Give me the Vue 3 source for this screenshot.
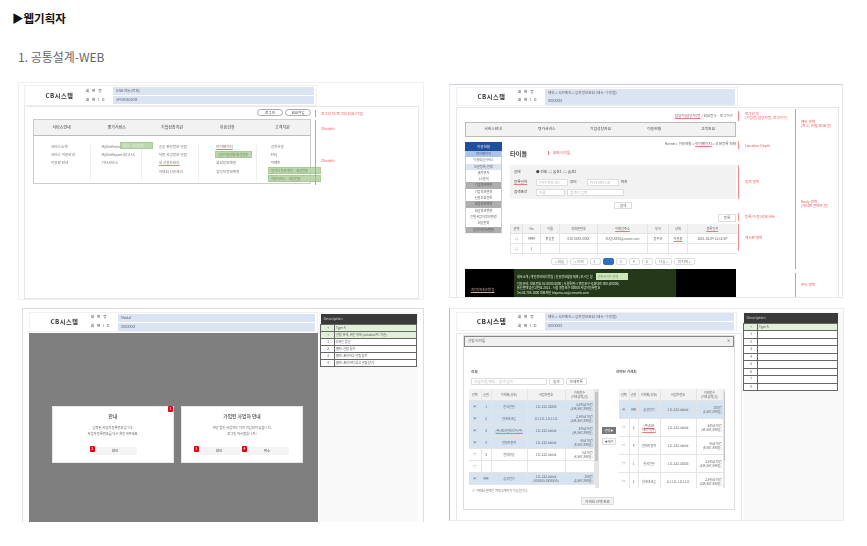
<script setup>
const navMenus = ['서비스안내', '평가서비스', '기업성장지원', '이용현황', '고객지원']
const navLists = [
  ['서비스소개', '서비스 이용안내', '이용료 안내'],
  ['MyBizRating', 'MyBizReport(보고서)', '기타서비스'],
  ['공공 조달정보 알림', '자동 사업정보 알림', '내 신용도관리', '거래처 신용관리'],
  ['마이페이지', '\u00a0', '회원정보변경', '담당자정보변경'],
  ['공지사항', 'FAQ', '이벤트']
]
const sideMenu = [
  ['마이페이지', 'on'], ['이용회원서비스', ''], ['부분등록/현황', 'sub'], ['출자연자', ''], ['1:1문의', ''],
  ['기업정보변경', 'grp'], ['기업정보변경', ''], ['신용조회등록', ''], ['회원정보변경', 'grp'],
  ['회원정보변경', ''], ['간편사업자정보변경', ''], ['회원탈퇴', ''], ['담당자정보변경', 'grp']
]
const p2Head = ['선택', 'No', '이름', '휴대폰번호', '이메일주소', '부서', '상태', '등록일자']
const p2Cols = [12, 18, 19, 38, 50, 21, 19, 49]
const notes = [
  { t: '로그인 후\n(기업명, 담당자명, 로그아웃)', x: 288, y: 4 },
  { t: 'Location Depth', x: 288, y: 36 },
  { t: '검색 영역', x: 288, y: 72 },
  { t: '등록/수정/삭제 버튼', x: 288, y: 107 },
  { t: '게시판 영역', x: 288, y: 128 },
  { t: '메인 영역\n(로고, 유틸/GNB 등)', x: 344, y: 12 },
  { t: 'Body 영역\n(게시판 콘텐츠 등)', x: 344, y: 92 },
  { t: '푸터 영역', x: 344, y: 175 }
]
const bars = [
  { x: 281, y: 3, h: 10 }, { x: 281, y: 33, h: 8 }, { x: 281, y: 57, h: 34 },
  { x: 281, y: 105, h: 8 }, { x: 281, y: 116, h: 27 },
  { x: 338, y: 1, h: 160 }, { x: 338, y: 165, h: 24 }
]
const descA = [
  ['+', 'Type A', 1], ['+', '알림 위해, 버튼 위해 (window PC 기준)', 1], ['1', 'X 버튼 없음', 0],
  ['2', '클릭: 알림 닫기', 0], ['3', '클릭: 처리하고 알림 닫기', 0], ['4', '클릭: 처리하지 않고 알림 닫기', 0]
]
const descRows = ['1', '2', '3', '4', '5', '6', '7', '8']
const leftRows = [
  ['1', '한국건설', '111-222-33333', '3,345,678건', '(334,567,890원)', 1, 0],
  ['2', '한국테크론', '111111-1111111', '2,345,678건', '(234,567,890원)', 1, 0],
  ['3', '(주)ADS인테리어(주)', '111-222-#####', '345,678건', '(34,567,890원)', 1, 1],
  ['4', '현대자동차', '111-222-#####', '45,678건', '(9,567,890원)', 1, 0],
  ['5', '현대정공', '111-222-#####', '5,678건', '(4,567,890원)', 0, 0],
  ['', '', '', '', '', 0, 0],
  ['999', '삼성전기', '111-222-#####\n(555555-5555555)', '200건', '(3,567,890원)', 1, 0]
]
const rightRows = [
  ['999', '삼성전기', '111-222-#####', '200건', '(3,567,890원)', 1, 0],
  ['3', '(주)ADS\n테리어(주)', '111-222-#####', '345,678건', '(34,567,890원)', 0, 1],
  ['4', '현대자동차', '111-222-#####', '45,678건', '(9,567,890원)', 0, 0],
  ['1', '한국건설', '111-222-33333', '3,345,678건', '(334,567,890원)', 0, 0],
  ['2', '한국테크론', '111111-1111111', '2,345,678건', '(234,567,890원)', 0, 0]
]
</script>

<template>
  <div class="page">
    <h1 class="page-title">▶웹기획자</h1>
    <h2 class="sec-title">1. 공통설계-WEB</h2>

    <div class="shots">
      <!-- 메인 메뉴 -->
      <section class="shot p1">
        <div class="head">
          <strong class="logo">CB시스템</strong>
          <div class="head-rows">
            <div class="head-row"><span class="lbl">화 면 명</span><span class="fld">GNB 메뉴(전체)</span></div>
            <div class="head-row"><span class="lbl">화 면 I D</span><span class="fld">SP0805020M</span></div>
          </div>
        </div>
        <div class="frame">
          <div class="btns">
            <span class="pill">로그인</span>
            <span class="pill">회원가입</span>
          </div>
          <div class="gnb">
            <div class="gnb-top">
              <span v-for="m in navMenus" :key="m">{{ m }}</span>
            </div>
            <div class="gnb-body">
              <ul v-for="(list, i) in navLists" :key="i">
                <li v-for="item in list" :key="item" :class="{ redline: item === '마이페이지' || item === '내 신용도관리' }">{{ item }}</li>
              </ul>
            </div>
            <span class="hl h1">통합 · 회원전용</span>
            <span class="hl h2">신용이용현황 회원전용</span>
            <span class="hl h3">평가서 진위 확인 · 회원전용</span>
            <span class="hl h4">자문서비스 · 회원전용</span>
          </div>
          <i class="bar b1"></i>
          <em class="note n1">로그인 전/로그인(회원/기업)</em>
          <i class="bar b2"></i>
          <em class="note n2">10width</em>
          <em class="note n3">20width</em>
        </div>
      </section>

      <!-- 서브 페이지 -->
      <section class="shot p2">
        <div class="head">
          <strong class="logo">CB시스템</strong>
          <div class="head-rows joined">
            <div class="head-row"><span class="lbl">화 면 명</span><span class="fld">메인 &gt; 서브메인 &gt; 입력정보조회 (제시·수정탭)</span></div>
            <div class="head-row"><span class="lbl">화 면 I D</span><span class="fld">XXXXXXX</span></div>
          </div>
        </div>
        <div class="frame">
          <div class="util"><span class="redline">담당자(담당자)명</span> / 회원명 5 · 로그아웃</div>
          <div class="gnb-line">
            <span v-for="m in navMenus" :key="m">{{ m }}</span>
          </div>
          <div class="sub-wrap">
            <aside class="side">
              <div class="side-head">이용현황</div>
              <div v-for="(s, i) in sideMenu" :key="i" class="side-row" :class="s[1]">{{ s[0] }}</div>
            </aside>
            <div class="sub-main">
              <div class="crumb">Home &gt; 이용현황 &gt; <span class="redline">마이페이지</span> &gt; 부분등록 현황</div>
              <div class="title-row"><b>타이틀</b><span class="title-note">화면 타이틀</span></div>
              <div class="search">
                <div class="s-row"><span class="s-lbl">상태</span><span>● 전체 &nbsp;○ 옵션1 &nbsp;○ 옵션2</span></div>
                <div class="s-row">
                  <span class="s-lbl redline">등록일자</span>
                  <span class="s-in w32">YYYY-MM-DD</span><span>부터</span>
                  <span class="s-in w32 gap">YYYY-MM-DD</span><span>까지</span>
                </div>
                <div class="s-row">
                  <span class="s-lbl">검색조건</span>
                  <span class="s-in w29">이름</span>
                  <span class="s-in w57"><span class="redline">검색어</span> 입력</span>
                </div>
              </div>
              <div class="center"><span class="mini-btn">검색</span></div>
              <div class="right"><span class="mini-btn">등록</span></div>
              <table class="grid g2">
                <colgroup><col v-for="(w, i) in p2Cols" :key="i" :style="{ width: w + 'px' }" /></colgroup>
                <tr><th v-for="h in p2Head" :key="h"><span :class="{ redline: h === '이메일주소' || h === '등록일자' }">{{ h }}</span></th></tr>
                <tr>
                  <td>○</td><td>9999</td><td>홍길동</td><td>010-XXXX-XXXX</td><td>SUQI.XXXX@naver.com</td><td>총무부</td>
                  <td><span class="redline">사용중</span></td><td>2021-02-04 13:12:59</td>
                </tr>
                <tr><td>○</td><td>1</td><td></td><td></td><td></td><td></td><td></td><td></td></tr>
              </table>
              <div class="paging">
                <span>&lt; 처음</span><span>&lt; 이전</span><span>1</span><span class="cur">2</span>
                <span>3</span><span>4</span><span>5</span><span>다음 &gt;</span><span>마지막 &gt;</span>
              </div>
            </div>
          </div>
          <footer class="foot">
            <span class="foot-link">개인정보처리방침</span>
            <div class="foot-box">
              <div class="foot-top">회사소개 | 개인정보처리방침 | 신용정보활용체제 | 오시는 길 <span class="foot-sel">관련사이트 선택</span></div>
              <p>이용문의: 대표번호 02-0000-0000 | 서울특별시 영등포구 국회대로 000 (00000)</p>
              <p>통신판매업신고번호 2021 - 서울 영등포구 00000 사업자등록번호</p>
              <p>Tel:02.708.1000 대표메일 bizpnsu.xx@crmweb.com</p>
            </div>
          </footer>
          <i v-for="(b, i) in bars" :key="i" class="bar" :style="{ left: b.x + 'px', top: b.y + 'px', height: b.h + 'px' }"></i>
          <em v-for="n in notes" :key="n.t" class="note pre" :style="{ left: n.x + 'px', top: n.y + 'px' }">{{ n.t }}</em>
        </div>
      </section>

      <!-- 알림 모달 -->
      <section class="shot p3">
        <div class="split">
          <div class="left-col">
            <div class="head">
              <strong class="logo">CB시스템</strong>
              <div class="head-rows">
                <div class="head-row"><span class="lbl">화 면 명</span><span class="fld">Modal</span></div>
                <div class="head-row"><span class="lbl">화 면 I D</span><span class="fld">XXXXXXX</span></div>
              </div>
            </div>
            <div class="dim">
              <div class="modal">
                <b class="badge b-top">1</b>
                <h3>안내</h3>
                <p>입력된 사업자등록번호입니다.<br />사업자등록번호를 다시 확인해주세요.</p>
                <div class="m-btns"><span class="m-btn"><b class="badge">2</b>확인</span></div>
              </div>
              <div class="modal">
                <h3>가입된 사업자 안내</h3>
                <p>해당 법인 사업자는 이미 가입되어 있습니다.<br />로그인 하시겠습니까?</p>
                <div class="m-btns">
                  <span class="m-btn"><b class="badge">3</b>확인</span>
                  <span class="m-btn"><b class="badge">4</b>취소</span>
                </div>
              </div>
            </div>
          </div>
          <div class="desc-pane">
            <table class="desc">
              <colgroup><col class="no-col" /><col /></colgroup>
              <tr><th colspan="2">Description</th></tr>
              <tr v-for="d in descA" :key="d[1]" :class="{ green: d[2] }"><td class="no">{{ d[0] }}</td><td>{{ d[1] }}</td></tr>
            </table>
          </div>
        </div>
      </section>

      <!-- 거래처 선택 -->
      <section class="shot p4">
        <div class="split">
          <div class="left-col">
            <div class="head">
              <strong class="logo big">CB시스템</strong>
              <div class="head-rows">
                <div class="head-row"><span class="lbl">화 면 명</span><span class="fld">메인 &gt; 서브메인 &gt; 입력정보조회 (제시·수정탭)</span></div>
                <div class="head-row"><span class="lbl">화 면 I D</span><span class="fld">XXXXXXX</span></div>
              </div>
            </div>
            <div class="frame">
              <div class="pop">
                <div class="pop-title"><span>알림 타이틀</span><span>✕</span></div>
                <div class="pop-body">
                  <div class="lists">
                    <div class="list-left">
                      <div class="list-lbl">전체</div>
                      <div class="finder">
                        <span class="find-in">사업자명/번호 · 검색 입력</span>
                        <span class="mini-btn">검색</span><span class="mini-btn">전체목록</span>
                      </div>
                      <div class="scroll-t">
                        <table class="grid pick pl">
                          <colgroup><col class="c12" /><col class="c10" /><col class="c36" /><col class="c38" /><col class="c29" /></colgroup>
                          <tr><th>선택</th><th>순번</th><th>거래처(상호)</th><th>사업자번호</th><th>거래건수<br />(거래금액/원)</th></tr>
                          <tr v-for="(r, i) in leftRows" :key="i" :class="{ sel: r[5] }">
                            <td>{{ r[5] ? '▣' : '□' }}</td><td>{{ r[0] }}</td><td><span :class="{ redline: r[6] }">{{ r[1] }}</span></td>
                            <td class="pre">{{ r[2] }}</td><td class="amt">{{ r[3] }}<br />{{ r[4] }}</td>
                          </tr>
                        </table>
                        <div class="sbar"><i></i></div>
                      </div>
                      <div class="hint">※ 거래처 선택은 최대 5개까지 가능합니다.</div>
                    </div>
                    <div class="move">
                      <span class="mv dark">선택 ▶</span>
                      <span class="mv">◀ 제외</span>
                    </div>
                    <div class="list-right">
                      <div class="list-lbl">선택된 거래처</div>
                      <div class="scroll-t">
                        <table class="grid pick pr">
                          <colgroup><col class="c10" /><col class="c9" /><col class="c22" /><col class="c36" /><col class="c27" /></colgroup>
                          <tr><th>선택</th><th>순번</th><th>거래처(상호)</th><th>사업자번호</th><th>거래건수<br />(거래금액/원)</th></tr>
                          <tr v-for="(r, i) in rightRows" :key="i" :class="{ sel: r[5] }">
                            <td>{{ r[5] ? '▣' : '□' }}</td><td>{{ r[0] }}</td><td class="pre"><span :class="{ redline: r[6] }">{{ r[1] }}</span></td>
                            <td>{{ r[2] }}</td><td class="amt">{{ r[3] }}<br />{{ r[4] }}</td>
                          </tr>
                        </table>
                        <div class="sbar"><i></i></div>
                      </div>
                    </div>
                  </div>
                  <div class="center"><span class="mini-btn wide">거래처 선택 완료</span></div>
                </div>
              </div>
            </div>
          </div>
          <div class="desc-pane">
            <table class="desc">
              <colgroup><col class="no-col" /><col /></colgroup>
              <tr><th colspan="2">Description</th></tr>
              <tr class="green"><td class="no">+</td><td>Type A</td></tr>
              <tr v-for="d in descRows" :key="d" class="tall"><td class="no">{{ d }}</td><td></td></tr>
            </table>
          </div>
        </div>
      </section>
    </div>
  </div>
</template>

<style>
html, body { margin: 0; background: #fff; }
</style>

<style scoped>
.page {
  width: 867px;
  height: 546px;
  overflow: hidden;
  box-sizing: border-box;
  padding-top: 11px;
  font-family: "Noto Sans CJK KR", "Noto Sans", sans-serif;
  color: #444;
}
.page-title { margin: 0 0 0 12px; font-size: 11.5px; line-height: 14px; font-weight: 700; color: #111; }
.sec-title { margin: 25px 0 0 18px; font-size: 12px; line-height: 14px; font-weight: 400; color: #666; }

.shots {
  display: grid;
  grid-template-columns: 431px 400px;
  grid-template-rows: 218px 214px;
  row-gap: 8px;
  margin: 18px 0 0 18px;
}
.shot {
  position: relative;
  box-sizing: border-box;
  background: #fff;
  font-size: 3.6px;
  line-height: 1.2;
  filter: blur(0.4px);
  overflow: hidden;
}
.redline { text-decoration: underline; text-decoration-color: #ee7777; }
.pre { white-space: pre-line; }
.center { display: flex; justify-content: center; }
.right { display: flex; justify-content: flex-end; }

/* panels */
.p1 { width: 406px; height: 218px; padding: 2px 5px 0; border: 1px solid #efefef; }
.p2 { width: 394px; height: 214px; margin: 2px 0 0; padding: 2px 5px 0 6px; border: 1px solid #e8e8e8; border-top-color: #ccd; }
.p3 { width: 402px; height: 214px; margin-left: 4px; padding: 3px 6px 0 6px; border: 1px solid #ddd; border-bottom: 0; }
.p4 { width: 395px; height: 213px; padding: 3px 6px 0 6px; border: 1px solid #ececec; border-left: 1px solid #bbb; }

/* screen header */
.head { display: flex; align-items: center; width: 293px; height: 21px; box-sizing: border-box; border: 1px solid #f0f0f0; }
.p2 .head { width: 282px; height: 19px; }
.p3 .head { width: 289px; height: 20px; }
.p4 .head { width: 281px; height: 19px; }
.logo { width: 61px; flex: none; text-align: center; padding-left: 8px; box-sizing: border-box; font-size: 6.2px; letter-spacing: .5px; color: #333; }
.p4 .logo { font-size: 6.6px; }
.head-rows { flex: 1; display: flex; flex-direction: column; gap: 1px; padding-right: 2px; }
.head-rows.joined { gap: 0; }
.head-row { display: flex; align-items: center; height: 8px; }
.lbl { width: 27px; flex: none; word-spacing: 2px; color: #444; white-space: nowrap; }
.fld { flex: 1; height: 100%; padding-left: 3px; background: #dbe4f3; color: #666; line-height: 8px; }
.frame { position: relative; box-sizing: border-box; border: 1px solid #e6e6e6; }
.p1 .frame { width: 395px; height: 193px; }
.p2 .frame { width: 383px; height: 191px; margin-top: 1px; padding: 6px 8px 0; }
.p4 .frame { height: 190px; margin-top: 2px; padding: 1px 6px 0; }

/* gnb sample */
.btns { display: flex; justify-content: flex-end; gap: 2px; margin: 2px 107px 0 0; }
.pill { width: 26px; height: 7px; line-height: 6px; text-align: center; box-sizing: border-box; border: 1px solid #aaa; border-radius: 4px; }
.gnb { position: relative; width: 278px; height: 65px; margin: 3px 0 0 8px; box-sizing: border-box; border: 1px solid #ccc; }
.gnb-top { display: flex; height: 15px; align-items: center; background: #f2f2f2; border-bottom: 1px solid #bbb; font-size: 4px; }
.gnb-top span { flex: 1; text-align: center; }
.gnb-body { display: flex; padding-top: 9px; }
.gnb-body ul { flex: 1; margin: 0; padding: 0 0 6px 17px; height: 30px; list-style: none; border-right: 1px solid #eee; color: #777; }
.gnb-body ul:nth-child(2) { padding-left: 10px; }
.gnb-body ul:last-child { padding-left: 14px; border-right: 0; }
.gnb-body li { height: 8.2px; white-space: nowrap; }
.hl { position: absolute; height: 7px; line-height: 5.5px; padding-left: 2px; box-sizing: border-box; background: #bcd7ad; color: #e7f2e0; white-space: nowrap; overflow: hidden; border: 1px solid #a8c998; font-size: 3.2px; }
.h1 { left: 86px; top: 22px; width: 33px; }
.h2 { left: 181px; top: 31px; width: 37px; color: #6f8a60; }
.h3 { left: 234px; top: 47px; width: 53px; color: #6f8a60; }
.h4 { left: 234px; top: 55px; width: 53px; color: #6f8a60; }
.bar { position: absolute; width: 1px; background: #f28b8b; }
.b1 { left: 290px; top: 3px; height: 7px; }
.b2 { left: 290px; top: 13px; height: 65px; }
.note { position: absolute; font-style: normal; color: #e85a5a; white-space: nowrap; }
.note.pre { white-space: pre; }
.n1 { left: 296px; top: 5px; }
.n2 { left: 296px; top: 20px; }
.n3 { left: 296px; top: 52px; }

/* sub page */
.util { height: 8px; margin-right: 97px; text-align: right; color: #666; }
.gnb-line { display: flex; align-items: center; width: 271px; height: 15px; box-sizing: border-box; border: 1px solid #bbb; background: #f2f2f2; font-size: 3.8px; }
.gnb-line span { flex: 1; text-align: center; }
.sub-wrap { display: flex; gap: 8px; width: 271px; margin-top: 5px; }
.side { width: 37px; flex: none; background: #f3f3f3; padding-bottom: 1px; align-self: flex-start; }
.side-head { height: 9px; line-height: 9px; text-align: center; background: #1f4e9c; color: #dce6f5; }
.side-row { height: 6.3px; line-height: 6.3px; text-align: center; background: #fff; border: 0 solid #ccc; border-width: 0 1px; box-sizing: border-box; font-size: 3.2px; color: #666; white-space: nowrap; overflow: hidden; }
.side-row.on { background: #a9c2e8; color: #557; }
.side-row.sub { background: #dbe4f3; }
.side-row.grp { background: #aeaeae; color: #555; }
.sub-main { flex: 1; min-width: 0; }
.crumb { text-align: right; color: #666; }
.title-row { display: flex; align-items: center; gap: 13px; height: 14px; }
.title-row b { font-size: 6.2px; color: #444; width: 25px; }
.title-note { padding-left: 4px; border-left: 1px solid #ef7f7f; color: #e85a5a; }
.search { margin-top: 5px; padding: 2px 4px; height: 34px; box-sizing: border-box; background: #f2f2f2; border-radius: 1px; }
.s-row { display: flex; align-items: center; gap: 2px; height: 10px; }
.s-lbl { width: 20px; flex: none; }
.s-in { height: 6.5px; line-height: 6px; padding-left: 2px; box-sizing: border-box; background: #fff; border: 1px solid #ddd; color: #bbb; white-space: nowrap; overflow: hidden; }
.w32 { width: 32px; }
.w29 { width: 29px; }
.w57 { width: 57px; }
.gap { margin-left: 8px; }
.mini-btn { display: inline-block; padding: 0 3px; height: 7px; line-height: 6px; background: #fff; border: 1px solid #ddd; box-sizing: border-box; color: #666; white-space: nowrap; }
.search + .center { margin-top: 3px; }
.search + .center .mini-btn { width: 18px; text-align: center; }
.right { margin-top: 5px; }
.right .mini-btn { width: 18px; text-align: center; height: 8px; }
.grid { border-collapse: collapse; table-layout: fixed; width: 226px; text-align: center; color: #666; }
.grid th { background: #f2f2f2; font-weight: 400; }
.grid th, .grid td { padding: 0; border: 1px solid #e4e4e4; white-space: nowrap; overflow: hidden; }
.grid td.pre { white-space: pre-line; }
.g2 { margin-top: 2px; font-size: 3.2px; }
.g2 th, .g2 td { height: 9px; border-width: 0 0 1px 1px; }
.paging { display: flex; justify-content: center; gap: 2px; margin-top: 4px; height: 7px; color: #777; }
.paging span { min-width: 3px; padding: 0 3px; line-height: 5px; border: 1px solid #ddd; border-radius: 2px; }
.paging .cur { background: #2e6fc2; color: #2e6fc2; border-color: #2e6fc2; }
.foot { display: flex; width: 271px; height: 32px; margin-top: 4px; background: #000; }
.foot-link { width: 49px; flex: none; padding: 19px 0 0 6px; box-sizing: border-box; color: #caa; text-decoration: underline; font-size: 3.2px; }
.foot-box { width: 162px; background: #24391a; padding: 4px 3px; box-sizing: border-box; color: #dfe8d8; font-size: 3.1px; }
.foot-box p { margin: 1.2px 0 0; white-space: nowrap; }
.foot-top { display: flex; align-items: center; gap: 3px; height: 7px; white-space: nowrap; }
.foot-sel { width: 30px; height: 7px; line-height: 7px; padding-left: 2px; background: #cfe6bd; color: #7d9a6b; }

/* split panels */
.split { display: flex; height: 100%; }
.left-col { width: 290px; flex: none; }
.p4 .left-col { width: 286px; }
.dim { display: flex; gap: 7px; width: 289px; height: 190px; margin-top: 1px; padding: 73px 0 0 23px; box-sizing: border-box; background: #7f7f7f; }
.modal { position: relative; width: 122px; height: 57px; box-sizing: border-box; padding-top: 5px; background: #fff; text-align: center; border: 1px solid #e8e8e8; color: #555; }
.modal h3 { margin: 0; font-size: 4.8px; line-height: 7px; font-weight: 500; color: #444; }
.modal p { margin: 6px 0 0; font-size: 3.3px; line-height: 6.4px; color: #666; }
.m-btns { position: absolute; left: 40px; right: 12px; bottom: 7px; display: flex; gap: 4px; }
.modal:nth-child(2) .m-btns { left: 15px; }
.m-btn { position: relative; width: 44px; height: 8px; line-height: 8px; background: #f4f4f4; border-radius: 3px; }
.badge { position: absolute; left: -3px; top: -1px; width: 5px; height: 6px; line-height: 6px; background: #e60012; color: #fff; font-size: 3px; border-radius: 1px; }
.b-top { left: auto; right: 0; top: -1px; }
.desc-pane { flex: 1; padding: 2px 1px 0; background: #f9f9f9; }
.p4 .desc-pane { padding: 1px 6px 0 0; margin-left: 1px; }
.desc { width: 97px; border-collapse: collapse; table-layout: fixed; color: #555; }
.p4 .desc { width: 95px; }
.no-col { width: 14px; }
.desc th { height: 8px; padding-left: 3px; text-align: left; background: #3a3a3a; color: #ccc; font-weight: 400; }
.desc td { height: 6px; padding: 0 0 0 1px; border: 1px solid #666; background: #fff; white-space: nowrap; overflow: hidden; font-size: 3.1px; }
.desc .no { text-align: center; }
.desc .green td { background: #e2efd9; }
.desc .tall td { height: 6.5px; }

/* popup */
.pop { width: 272px; height: 175px; box-sizing: border-box; border: 1px solid #ddd; }
.pop-title { display: flex; justify-content: space-between; align-items: center; height: 11px; padding: 0 3px; background: #f0f0f0; border: 1px solid #888; box-sizing: border-box; color: #666; }
.pop-body { padding: 21px 0 0 5px; }
.lists { display: flex; }
.list-left { width: 130px; flex: none; }
.list-right { width: 106px; flex: none; }
.list-lbl { height: 10px; line-height: 8px; font-weight: 500; padding-left: 2px; }
.list-right .list-lbl { margin-left: -5px; height: 21px; }
.finder { display: flex; gap: 2px; height: 11px; padding-left: 2px; }
.find-in { width: 76px; height: 7px; box-sizing: border-box; border: 1px solid #ddd; color: #bbb; padding-left: 2px; line-height: 5.5px; white-space: nowrap; overflow: hidden; }
.finder .mini-btn { border-radius: 1px; }
.scroll-t { display: flex; height: 99px; overflow: hidden; }
.pick { font-size: 3.1px; align-self: flex-start; }
.pl { width: 125px; }
.pr { width: 101px; }
.pick th, .pick td { border-width: 0 1px 1px 0; }
.pick th { height: 11px; }
.pl td { height: 11px; }
.pr td { height: 17px; }
.pick .sel td { background: #d6e4f2; }
.amt { text-align: right; padding-right: 1px !important; }
.c9 { width: 9px; }
.c10 { width: 10px; }
.c12 { width: 12px; }
.c22 { width: 22px; }
.c27 { width: 27px; }
.c29 { width: 29px; }
.c36 { width: 36px; }
.c38 { width: 38px; }
.sbar { width: 5px; background: #e4e4e4; }
.sbar i { display: block; width: 3px; height: 70%; margin: 3px auto 0; background: #c4c4c4; }
.hint { height: 7px; margin-top: 1px; padding-left: 3px; color: #777; font-size: 3.2px; }
.move { width: 20px; flex: none; display: flex; flex-direction: column; align-items: center; gap: 4px; padding-top: 59px; }
.mv { width: 14px; height: 7px; line-height: 6px; text-align: center; box-sizing: border-box; border: 1px solid #ddd; white-space: nowrap; font-size: 3px; color: #666; }
.mv.dark { background: #777; color: #eee; border-color: #777; }
.wide { width: 33px; height: 8px; padding: 0; line-height: 7px; text-align: center; background: #f2f2f2; }
.pop-body > .center { margin-top: 1px; padding-right: 8px; }
</style>
